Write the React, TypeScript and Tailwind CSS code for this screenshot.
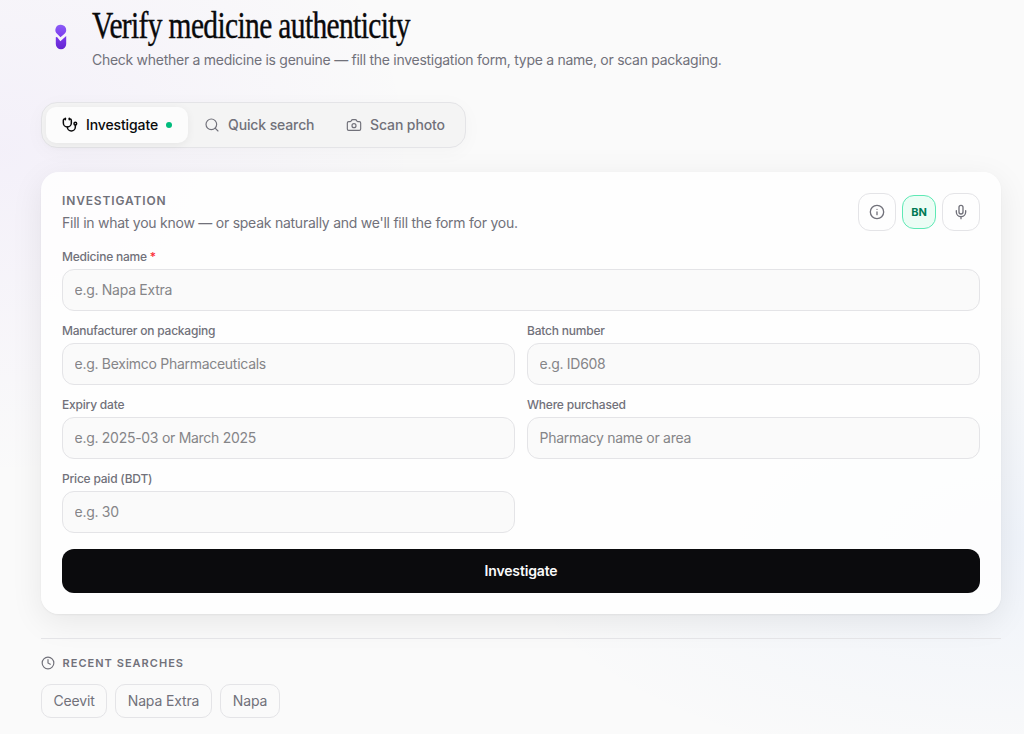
import { useState } from "react";
import { Camera, Clock, Info, Mic, Search, Stethoscope } from "lucide-react";
import { clsx } from "clsx";

const TABS = [
    { id: "investigate", label: "Investigate", icon: Stethoscope, width: "w-[142px]", text: "w-[72px]" },
    { id: "search", label: "Quick search", icon: Search, width: "w-[142px]", text: "w-[86px]" },
    { id: "scan", label: "Scan photo", icon: Camera, width: "w-[131px]", text: "w-[75px]" },
];

const FIELDS = [
    { name: "medicine", label: "Medicine name", placeholder: "e.g. Napa Extra", required: true, wide: true },
    { name: "manufacturer", label: "Manufacturer on packaging", placeholder: "e.g. Beximco Pharmaceuticals" },
    { name: "batch", label: "Batch number", placeholder: "e.g. ID608" },
    { name: "expiry", label: "Expiry date", placeholder: "e.g. 2025-03 or March 2025" },
    { name: "where", label: "Where purchased", placeholder: "Pharmacy name or area" },
    { name: "price", label: "Price paid (BDT)", placeholder: "e.g. 30" },
];

const RECENT = [
    { name: "Ceevit", width: "w-[66px]" },
    { name: "Napa Extra", width: "w-[97px]" },
    { name: "Napa", width: "w-[60px]" },
];

function Logo() {
    return (
        <svg width="40" height="40" viewBox="0 0 40 40" className="shrink-0">
            <defs>
                <linearGradient id="pill" x1="0" y1="0" x2="0" y2="1">
                    <stop offset="0" stopColor="#8b5cf6" />
                    <stop offset="1" stopColor="#7c3aed" />
                </linearGradient>
                <linearGradient id="pillBase" x1="0" y1="0" x2="0" y2="1">
                    <stop offset="0" stopColor="#7c3aed" />
                    <stop offset="1" stopColor="#6425d0" />
                </linearGradient>
            </defs>
            <path d="M20 7.800a5.200 5.200 0 0 1 5.200 5.200c0 1.500-.5 2.600-1.400 3.600L19.500 20.300 16.300 17A5.200 5.200 0 0 1 20 7.800z" fill="url(#pill)" />
            <path d="M14.800 20.200 16 20l3.400 4.200L25.200 19v8a5.200 5.200 0 0 1-10.400 0z" fill="url(#pillBase)" />
        </svg>
    );
}

export default function App() {
    const [tab, setTab] = useState("investigate");

    return (
        <div className="h-[734px] w-full overflow-hidden bg-[#fafafa] bg-[radial-gradient(ellipse_420px_330px_at_0px_150px,rgba(124,58,237,0.05),transparent),radial-gradient(ellipse_520px_240px_at_1024px_540px,rgba(59,130,246,0.06),transparent)] pr-[23px] pl-[41px] font-[Inter,sans-serif] text-[#71717a]">
            {/* Header */}
            <header className="flex h-[102px] items-start">
                <div className="pt-[17px]">
                    <Logo />
                </div>
                <div className="ml-[11px] pt-[5px]">
                    <h1 className="h-[40px] w-[318px] origin-left scale-x-[0.775] font-['Liberation_Serif',serif] text-[38px] leading-[40px] tracking-[-0.8px] whitespace-nowrap text-[#0a0a0b] [-webkit-text-stroke:0.4px_#0a0a0b]">
                        Verify medicine authenticity
                    </h1>
                    <p className="mt-[4px] text-[14px] leading-[22px] tracking-[-0.277px] whitespace-nowrap">
                        Check whether a medicine is genuine — fill the investigation form, type a name, or scan packaging.
                    </p>
                </div>
            </header>

            {/* Mode tabs */}
            <div className="flex h-[46px] w-[425px] items-center rounded-2xl border border-[#e4e4e7] bg-[#f4f4f4] p-1 shadow-[0_4px_20px_rgba(0,0,0,0.03)]">
                {TABS.map(({ id, label, icon: Icon, width, text }) => (
                    <button
                        key={id}
                        onClick={() => setTab(id)}
                        className={clsx(
                            "flex h-[36px] items-center gap-2 rounded-[10px] pl-4 text-[14px] font-medium tracking-[-0.12px] whitespace-nowrap",
                            width,
                            tab === id && "bg-[#fcfcfc] text-[#0a0a0b] shadow-[0_2px_8px_rgba(0,0,0,0.06)]"
                        )}
                    >
                        <Icon size={16} strokeWidth={tab === id ? 2.25 : 1.75} className="shrink-0" />
                        <span className={clsx("pb-px", text)}>{label}</span>
                        {tab === id && <span className="size-1.5 shrink-0 rounded-full bg-[#00bc7d]" />}
                    </button>
                ))}
            </div>

            {/* Investigation form */}
            <section className="mt-6 h-[442px] rounded-[18px] bg-white/85 px-[21px] pt-[21px] shadow-[0_1px_2px_rgba(0,0,0,0.05),0_8px_32px_rgba(0,0,0,0.08)]">
                <div className="flex h-[38px] items-start justify-between">
                    <div>
                        <h2 className="text-[12px] leading-4 font-semibold tracking-[0.860px]">INVESTIGATION</h2>
                        <p className="mt-1 text-[14px] leading-5 tracking-[-0.248px] whitespace-nowrap">
                            Fill in what you know — or speak naturally and we'll fill the form for you.
                        </p>
                    </div>
                    <div className="flex items-center gap-1.5">
                        <button className="flex size-[38px] items-center justify-center rounded-xl border border-[#e4e4e7]" title="How it works">
                            <Info size={16} strokeWidth={2} />
                        </button>
                        <button className="flex size-[34px] items-center justify-center rounded-xl border border-[#5ee9b5] bg-[#ecfdf5] text-[11px] font-bold text-[#007a55]">
                            BN
                        </button>
                        <button className="flex size-[38px] items-center justify-center rounded-xl border border-[#e4e4e7]" title="Speak">
                            <Mic size={16} strokeWidth={2} />
                        </button>
                    </div>
                </div>

                <form onSubmit={(e) => e.preventDefault()}>
                    <div className="mt-[18px] grid grid-cols-2 gap-3">
                        {FIELDS.map((field) => (
                            <label key={field.name} className={clsx("block", field.wide && "col-span-2")}>
                                <span className="block h-4 text-[12px] leading-4 font-medium tracking-[-0.210px]">
                                    {field.label}
                                    {field.required && <span className="text-[#fb2c36]"> *</span>}
                                </span>
                                <input
                                    name={field.name}
                                    placeholder={field.placeholder}
                                    className="mt-1 block h-[42px] w-full rounded-xl border border-[#e4e4e7] bg-[#fafafa] px-[11.500px] pb-0.5 text-[14px] tracking-[-0.280px] placeholder:text-[#858588]"
                                />
                            </label>
                        ))}
                    </div>
                    <button className="mt-4 h-11 w-full rounded-xl bg-[#0b0b0d] pb-0.5 text-[14px] font-semibold tracking-[-0.150px] text-[#fafafa]">
                        Investigate
                    </button>
                </form>
            </section>

            {/* Recent searches */}
            <section className="mt-6 border-t border-[#e4e4e7] pt-4">
                <h3 className="flex h-4 items-center gap-[7.500px] text-[11px] font-semibold tracking-[1.030px]">
                    <Clock size={14} strokeWidth={2} />
                    RECENT SEARCHES
                </h3>
                <div className="mt-[13px] flex gap-2">
                    {RECENT.map((item) => (
                        <button key={item.name} className={clsx("h-[34px] rounded-[10px] border border-[#e4e4e7] pb-px text-[14px] tracking-[-0.150px] whitespace-nowrap", item.width)}>
                            {item.name}
                        </button>
                    ))}
                </div>
            </section>
        </div>
    );
}
